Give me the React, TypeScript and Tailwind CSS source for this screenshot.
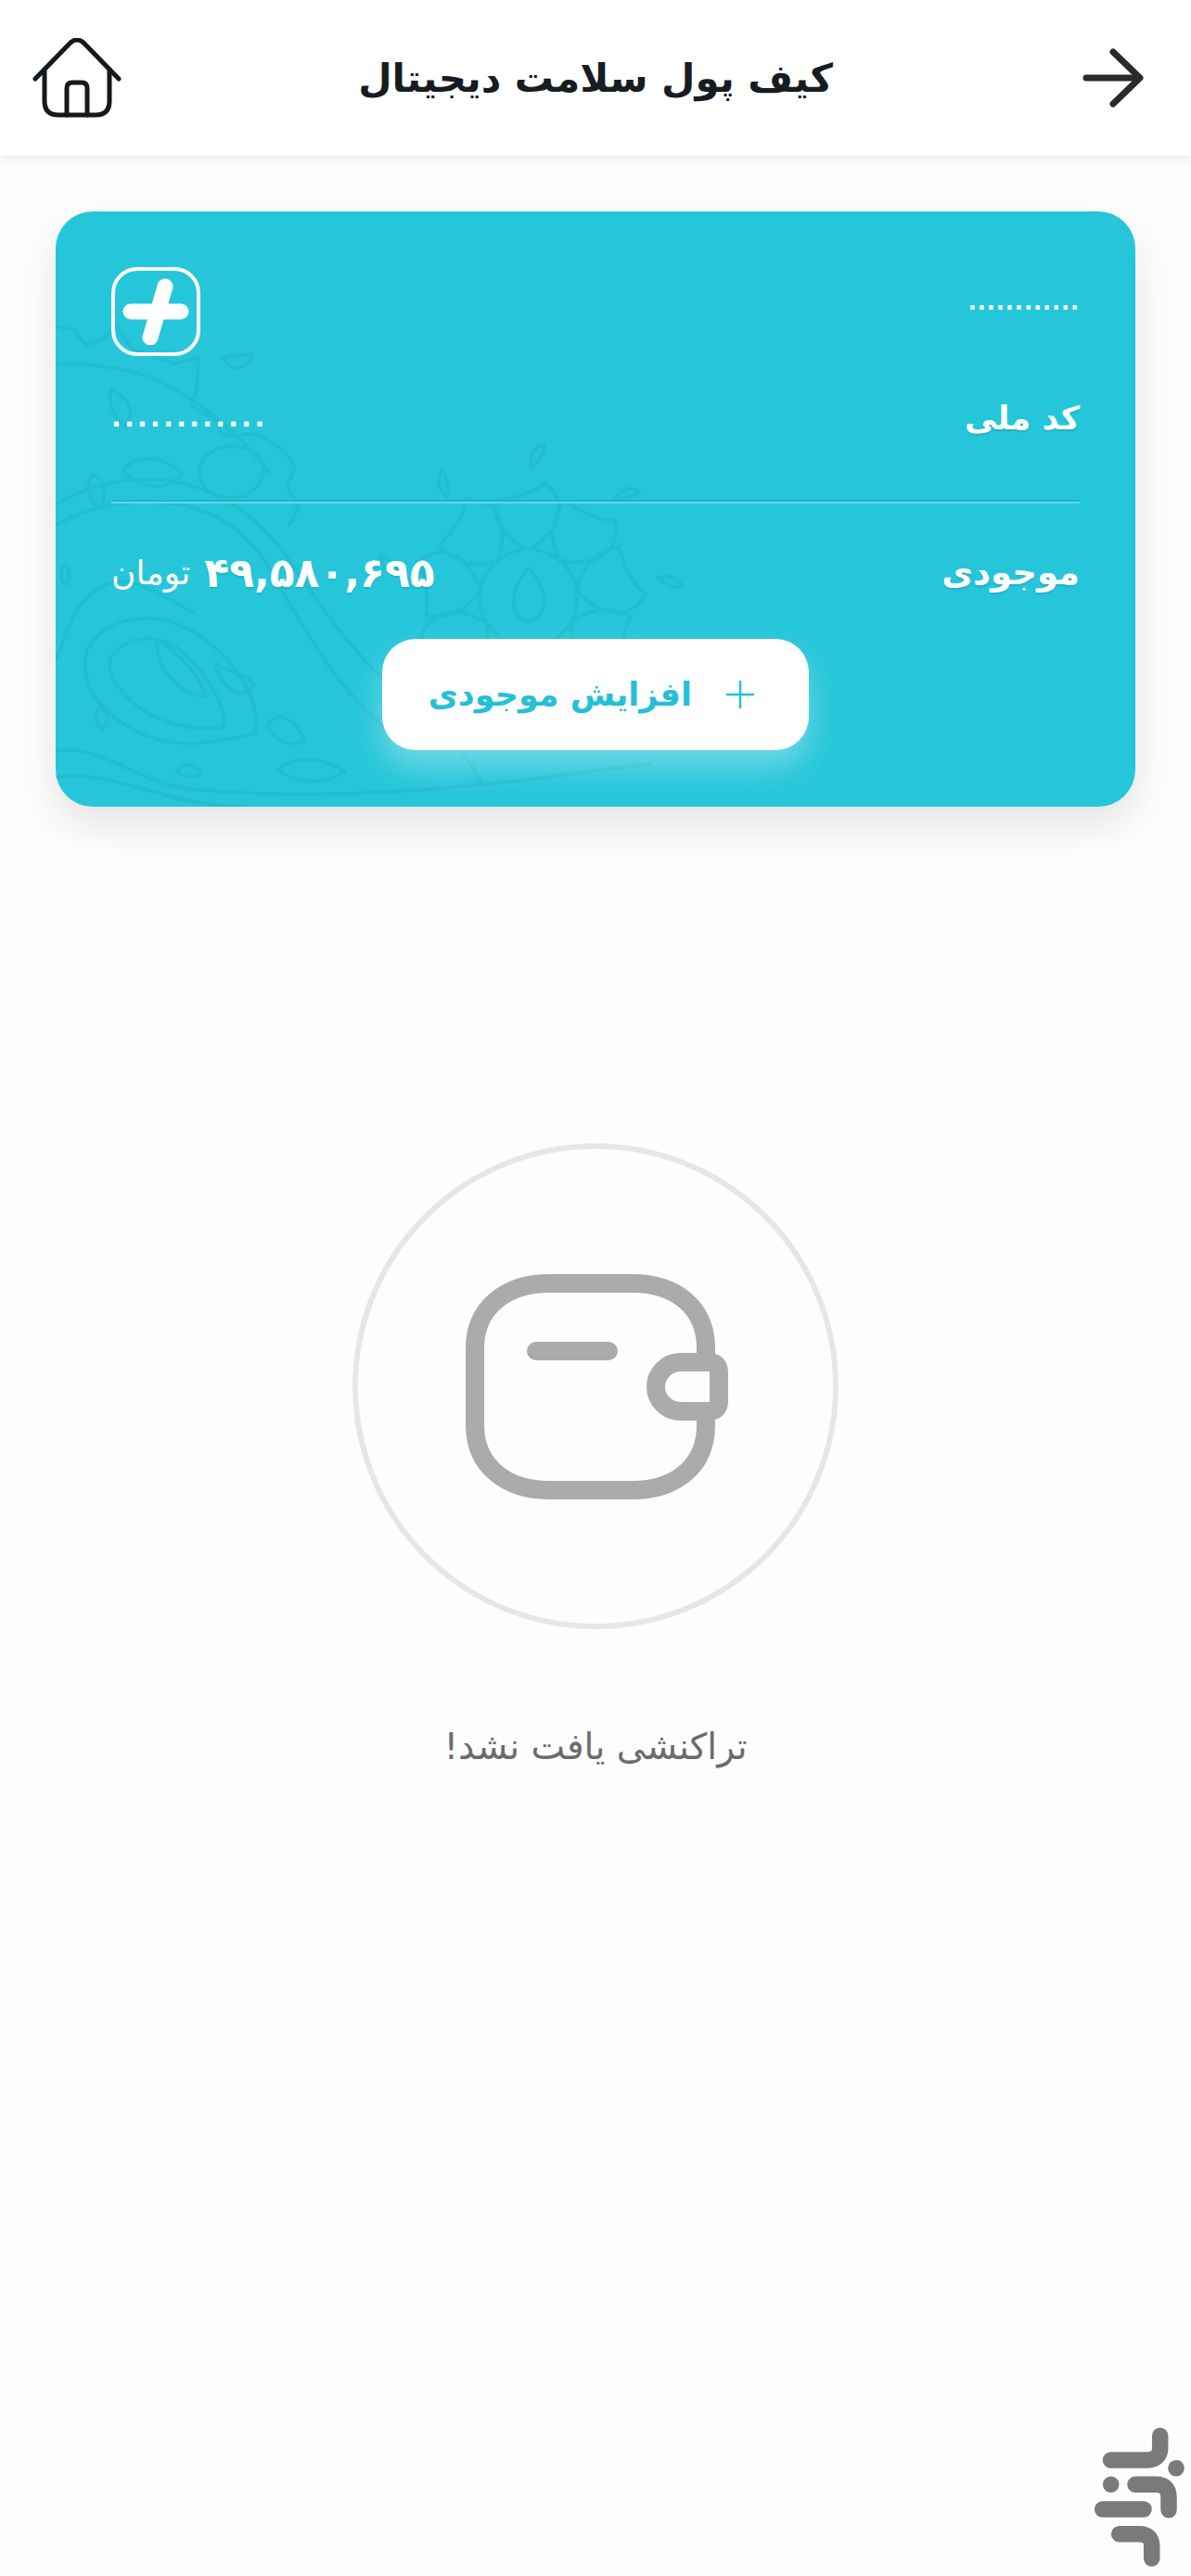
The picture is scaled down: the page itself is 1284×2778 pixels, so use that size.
import React from 'react';

const petals = [0, 40, 80, 120, 160, 200, 240, 280, 320];

function Flower({ x, y, r }: { x: number; y: number; r: number }) {
  return (
    <g transform={`translate(${x} ${y})`}>
      {petals.map(a => (
        <g key={a} transform={`rotate(${a})`}>
          <path d={`M0 ${-r * 0.42} C${r * 0.3} ${-r * 0.6} ${r * 0.34} ${-r * 0.82} ${r * 0.14} ${-r} C${r * 0.02} ${-r * 0.88} ${-r * 0.18} ${-r * 0.86} ${-r * 0.3} ${-r * 0.84} C${-r * 0.3} ${-r * 0.66} ${-r * 0.2} ${-r * 0.5} 0 ${-r * 0.42}Z`} />
          <path d={`M${r * 0.02} ${-r * 1.12} q${r * 0.1} ${-r * 0.08} ${r * 0.12} ${-r * 0.2} q${-r * 0.14} ${r * 0.02} ${-r * 0.12} ${r * 0.2}Z`} />
        </g>
      ))}
      <circle r={r * 0.42} />
      <path d={`M0 ${-r * 0.26} C${r * 0.2} ${-r * 0.04} ${r * 0.14} ${r * 0.2} 0 ${r * 0.2} C${-r * 0.14} ${r * 0.2} ${-r * 0.2} ${-r * 0.04} 0 ${-r * 0.26}Z`} />
    </g>
  );
}

// faint paisley artwork behind the card, coordinates are page pixels
function Paisley() {
  return (
    <svg
      viewBox="60 228 1164 642"
      className="absolute inset-0 h-full w-full"
      fill="none"
      stroke="#23bdd1"
      strokeWidth="4"
      strokeLinejoin="round"
      strokeLinecap="round"
    >
      <path d="M60 352 L80 356 L92 372 L112 366 L126 352 L142 376 L188 392 L214 386 L212 420 L206 438 L232 452 L240 470 L278 468 L306 486 L318 502 L310 526 L322 546 L312 566" />
      <path d="M60 392 C110 392 160 400 196 424 C240 452 268 480 290 510" />
      <path d="M60 544 C100 520 150 510 200 522 C250 534 290 570 316 610 C350 660 390 720 440 752 C480 780 500 810 520 846" />
      <path d="M60 566 C110 540 160 535 210 548 C250 560 280 590 300 630 C330 680 360 740 420 790" />
      <path d="M60 712 C74 680 78 650 110 632 C140 616 172 642 208 660" />
      <path d="M60 810 C110 800 150 850 220 852 C310 860 420 856 520 846 C600 838 640 830 700 824" />
      <path d="M60 838 C130 830 170 868 260 870" />
      <path d="M94 700 C120 660 170 660 206 680 C250 706 280 750 276 790 C240 800 190 810 150 790 C110 770 84 740 94 700Z" />
      <path d="M120 708 C140 680 180 684 204 710 C232 738 244 768 240 784 C200 790 160 776 138 752 C122 736 114 722 120 708Z" />
      <path d="M170 690 C196 708 214 726 222 752 C194 748 166 722 170 690Z" />
      <path d="M232 716 C252 726 270 728 274 740 C262 752 244 752 232 716Z" />
      <path d="M288 782 C300 764 318 776 330 800 C310 804 296 800 288 782Z" />
      <path d="M300 830 C318 812 350 818 372 832 C350 846 320 846 300 830Z" />
      <path d="M120 420 C140 430 146 444 136 460 C122 450 116 436 120 420Z" />
      <path d="M240 386 C252 382 262 384 272 382 C268 396 252 404 240 386Z" />
      <path d="M100 512 C112 516 116 532 108 548 C96 540 92 524 100 512Z" />
      <path d="M132 506 C150 490 172 490 196 510 C184 530 150 530 132 506Z" />
      <path d="M214 504 C226 478 262 472 284 498 C286 528 264 540 240 536 C226 534 214 524 214 504Z" />
      <Flower x={570} y={645} r={125} />
      <path d="M70 608 q8 10 2 22 q-12 -8 -2 -22Z" />
      <path d="M108 762 q14 10 2 24 q-12 -10 -2 -24Z" />
      <path d="M190 830 q18 -12 28 4 q-16 10 -28 -4Z" />
    </svg>
  );
}

function HomeIcon() {
  return (
    <svg viewBox="0 0 96 86" className="h-[86px] w-[96px]" fill="none" stroke="#14191d" strokeWidth="5" strokeLinecap="round" strokeLinejoin="round">
      <path d="M3 44 L41 5 Q48 -1 55 5 L93 44" />
      <path d="M13 34 V68 Q13 83 28 83 H68 Q83 83 83 68 V34" />
      <path d="M37 83 V54 Q37 48 43 48 H53 Q59 48 59 54 V83" />
    </svg>
  );
}

function ArrowIcon() {
  return (
    <svg viewBox="0 0 66 64" className="h-[64px] w-[66px]" fill="none" stroke="#2a2a2a" strokeWidth="7" strokeLinecap="round" strokeLinejoin="round">
      <path d="M4 32 H60" />
      <path d="M33 4 L62 32 L33 60" />
    </svg>
  );
}

function WalletIcon() {
  return (
    <svg viewBox="0 0 283 243" className="h-[243px] w-[283px]" fill="none" stroke="#ababab" strokeWidth="20" strokeLinecap="round">
      <path strokeLinecap="butt" d="M259 87 V80 C259 35 225 10 180 10 H90 C45 10 10 35 10 80 V163 C10 208 45 233 90 233 H180 C225 233 259 208 259 163 V156" />
      <path d="M232 95 H262 Q273 95 273 106 V137 Q273 148 262 148 H232 C217 148 205 136 205 121.5 C205 107 217 95 232 95Z" />
      <path d="M76 83 H154" />
    </svg>
  );
}

function BazaarLogo() {
  return (
    <svg viewBox="0 0 144 188" className="h-[188px] w-[144px]" fill="none" stroke="#7a7a7a" strokeWidth="17.5" strokeLinecap="round">
      <path d="M110.7 36.7 V50 Q110.7 63 95 63 H57.5" />
      <path d="M84 89.3 H106 Q120 89.3 120 103 V116.7" />
      <path d="M48.7 116 H93" />
      <path d="M66.7 142.7 H88 Q101.7 142.7 101.7 156 V169" />
      <circle cx="128" cy="71.7" r="8.8" fill="#7a7a7a" stroke="none" />
      <circle cx="57.7" cy="89.3" r="8.8" fill="#7a7a7a" stroke="none" />
    </svg>
  );
}

export default function App() {
  return (
    <div dir="rtl" className="flex min-h-screen flex-col bg-[#fdfdfd] font-['DejaVu_Sans',sans-serif]">
      <header className="flex h-[168px] shrink-0 items-center justify-between bg-white pl-[35px] pr-[51px] shadow-[0_2px_12px_rgba(0,0,0,0.1)]">
        <ArrowIcon />
        <h1 className="mr-[14px] text-[42px] font-bold text-[#171c20]">کیف پول سلامت دیجیتال</h1>
        <HomeIcon />
      </header>

      <section className="relative mx-[60px] mt-[60px] h-[642px] rounded-[40px] bg-[#26c6da] shadow-[0_20px_44px_rgba(0,0,0,0.1)]">
        <div className="absolute inset-0 overflow-hidden rounded-[40px]">
          <Paisley />
        </div>
        <div className="relative flex h-full flex-col px-[60px] pt-[60px] text-white">
          <div className="flex h-[96px] items-start justify-between">
            <span className="mt-[18px] text-[24px] font-bold leading-[40px] tracking-[0.9px]">............</span>
            <div className="flex h-[96px] w-[96px] items-center justify-center rounded-[28px] border-[4px] border-white">
              <svg viewBox="0 0 72 72" className="h-[72px] w-[72px]" fill="none" stroke="#fff" strokeWidth="17" strokeLinecap="round">
                <path d="M9 36 H63" />
                <path d="M46 9 L30 64" />
              </svg>
            </div>
          </div>

          <div className="mt-[37px] flex h-[60px] items-center justify-between">
            <span className="text-[35px] font-bold [text-shadow:0_2px_2px_rgba(0,0,0,0.1)]">کد ملی</span>
            <span className="text-[28px] font-bold tracking-[3.4px]">............</span>
          </div>

          <div className="mt-[58px] border-t-2 border-b-2 border-t-[#1fb3c8] border-b-[#62d7e6]" />

          <div className="mt-[45px] flex h-[60px] items-center justify-between">
            <span className="text-[37px] font-bold [text-shadow:0_2px_2px_rgba(0,0,0,0.1)]">موجودی</span>
            <div className="flex items-center gap-[15px]">
              <span className="text-[44px] font-bold [text-shadow:0_2px_2px_rgba(0,0,0,0.1)]">۴۹,۵۸۰,۶۹۵</span>
              <span className="text-[36px]">تومان</span>
            </div>
          </div>

          <div className="mt-[41px] flex justify-center">
            <button className="flex h-[120px] w-[460px] items-center gap-[37px] rounded-[36px] bg-white pr-[59px] text-[#26c0d6] shadow-[0_18px_34px_rgba(255,255,255,0.35)]">
              <svg viewBox="0 0 30 30" className="h-[30px] w-[30px]" fill="none" stroke="#26c0d6" strokeWidth="2.5">
                <path d="M0 15 H30" />
                <path d="M15 0 V30" />
              </svg>
              <span className="text-[35px] font-bold">افزایش موجودی</span>
            </button>
          </div>
        </div>
      </section>

      <div className="mt-[363px] flex flex-col items-center">
        <div className="flex h-[524px] w-[524px] items-center justify-center rounded-full border-[6px] border-[#e6e6e6] pl-[3px]">
          <WalletIcon />
        </div>
        <p className="mt-[98px] text-[39px] text-[#6b6b6b]">تراکنشی یافت نشد!</p>
      </div>

      <div className="mt-auto flex justify-end" dir="ltr">
        <BazaarLogo />
      </div>
    </div>
  );
}
